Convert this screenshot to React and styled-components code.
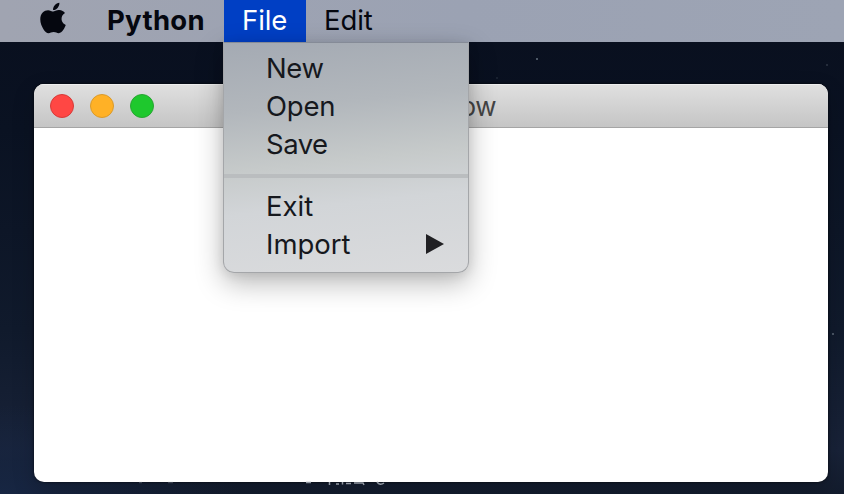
import React from "react";
import styled, { createGlobalStyle, css } from "styled-components";
import { FaApple } from "react-icons/fa";

const GlobalStyle = createGlobalStyle`
  * { box-sizing: border-box; }
  body { margin: 0; overflow: hidden; font-family: Inter, "Liberation Sans", sans-serif; }
`;

const Desktop = styled.div`
  position: relative;
  display: flex;
  flex-direction: column;
  width: 844px;
  height: 494px;
  overflow: hidden;
  background:
    radial-gradient(ellipse 240px 90px at 0 494px, #172643, transparent),
    linear-gradient(#090f1e 0, #0a1222 130px, #101a2c 330px, #182238 450px, #131c2d 494px);
`;

const MenuBar = styled.nav`
  display: flex;
  flex: none;
  align-items: center;
  height: 42px;
  padding-left: 40px;
  background: linear-gradient(90deg, #a0a4b1, #9ba2b3 55%, #9da4b4);
  color: #05070f;
  font-size: 27.5px;
  line-height: 42px;
`;

const AppleMark = styled(FaApple)`
  flex: none;
  width: 26px;
  height: 36px;
  margin: -6px 41px 0 0;
`;

const AppName = styled.span`
  width: 117px;
  font-size: 27.5px;
  font-weight: 700;
  letter-spacing: 0.3px;
  white-space: nowrap;
  padding-bottom: 3px;
`;

const BarItem = styled.span`
  width: 82px;
  height: 42px;
  padding: 0 0 0 18px;
  line-height: 41px;
  letter-spacing: ${(p) => p.$tracking};
  ${(p) =>
    p.$active &&
    css`
      background: #003fc4;
      color: #fff;
    `}
`;

const Window = styled.section`
  display: flex;
  flex: none;
  flex-direction: column;
  width: 794px;
  height: 398px;
  margin: 42px 0 0 34px;
  overflow: hidden;
  border-radius: 10px;
  background: #fff;
  box-shadow: 0 0 3px rgba(0, 0, 0, 0.7), 0 8px 22px rgba(0, 0, 0, 0.18);
`;

const TitleBar = styled.header`
  display: grid;
  grid-template-columns: 1fr auto 1fr;
  align-items: center;
  height: 44px;
  padding: 0 16px;
  border-bottom: 1px solid #a5a5a5;
  background: linear-gradient(#e0e0e0, #c5c5c5);
  box-shadow: inset 0 1px #eee;
`;

const Controls = styled.div`
  display: flex;
  gap: 16px;
`;

const Control = styled.i`
  width: 24px;
  height: 24px;
  border: 1px solid ${(p) => p.$edge};
  border-radius: 50%;
  background: ${(p) => p.$fill};
`;

const Title = styled.h1`
  margin: 0;
  width: 130px;
  color: #444;
  font-size: 26px;
  font-weight: 400;
  letter-spacing: -0.5px;
  line-height: 40px;
  text-align: right;
  padding-top: 2px;
`;

const Dropdown = styled.div`
  position: absolute;
  top: 42px;
  left: 223px;
  width: 246px;
  height: 231px;
  padding-top: 7px;
  border: 1px solid #a4a6a9;
  border-top-color: #858b97;
  border-radius: 0 0 11px 11px;
  background: linear-gradient(174deg, #a4aab3 0, #b2b7bc 28%, #c6caca 51%, #d2d5d8 68%, #dadbdd 100%);
  box-shadow: 0 10px 28px rgba(0, 0, 0, 0.28), 0 2px 12px rgba(0, 0, 0, 0.09);
  color: #16181d;
`;

const Entry = styled.div`
  display: flex;
  align-items: center;
  justify-content: space-between;
  height: 38px;
  padding: 0 24px 2px 42px;
  font-size: 27.5px;
  letter-spacing: ${(p) => p.$tracking};
`;

const Divider = styled.div`
  height: 4px;
  margin: 10px 0;
  background: #babdbf;
`;

const Arrow = styled.svg`
  width: 18px;
  height: 20px;
  fill: #202023;
`;

const Backdrop = styled.svg`
  position: absolute;
  inset: 0;
  width: 844px;
  height: 494px;
  pointer-events: none;
`;

export default function App() {
  return (
    <>
      <GlobalStyle />
      <Desktop>
        <Backdrop aria-hidden="true">
          <g fill="#65717e">
            <circle cx="537" cy="59" r="1" />
            <circle cx="497" cy="78" r=".7" opacity=".5" />
            <circle cx="827" cy="65" r="1" opacity=".4" />
            <circle cx="833" cy="334" r="1.1" opacity=".8" />
          </g>
          <g fill="none" stroke="#9299a3" strokeWidth="1.5">
            <path d="M306 482.5h5M329.5 482v3M336 484h3M342.5 482v2.5M346 483.5h5M354 483h9l1 2M377 482q3 4 7 1" />
            <path d="M139 482.5h3M168 482.5h5" opacity=".35" />
          </g>
        </Backdrop>
        <MenuBar>
          <AppleMark />
          <AppName>Python</AppName>
          <BarItem $active $tracking="-0.1px">File</BarItem>
          <BarItem $tracking="-0.1px">Edit</BarItem>
        </MenuBar>
        <Window>
          <TitleBar>
            <Controls>
              <Control $fill="#ff4744" $edge="#d63b39" />
              <Control $fill="#ffb126" $edge="#d99a2c" />
              <Control $fill="#1ec82d" $edge="#28a532" />
            </Controls>
            <Title>Window</Title>
          </TitleBar>
        </Window>
        <Dropdown>
          <Entry $tracking="-0.35px">New</Entry>
          <Entry $tracking="-0.2px">Open</Entry>
          <Entry $tracking="-0.5px">Save</Entry>
          <Divider />
          <Entry $tracking="0">Exit</Entry>
          <Entry $tracking="0">
            Import
            <Arrow viewBox="0 0 18 20">
              <path d="M0 0L18 10L0 20Z" />
            </Arrow>
          </Entry>
        </Dropdown>
      </Desktop>
    </>
  );
}
